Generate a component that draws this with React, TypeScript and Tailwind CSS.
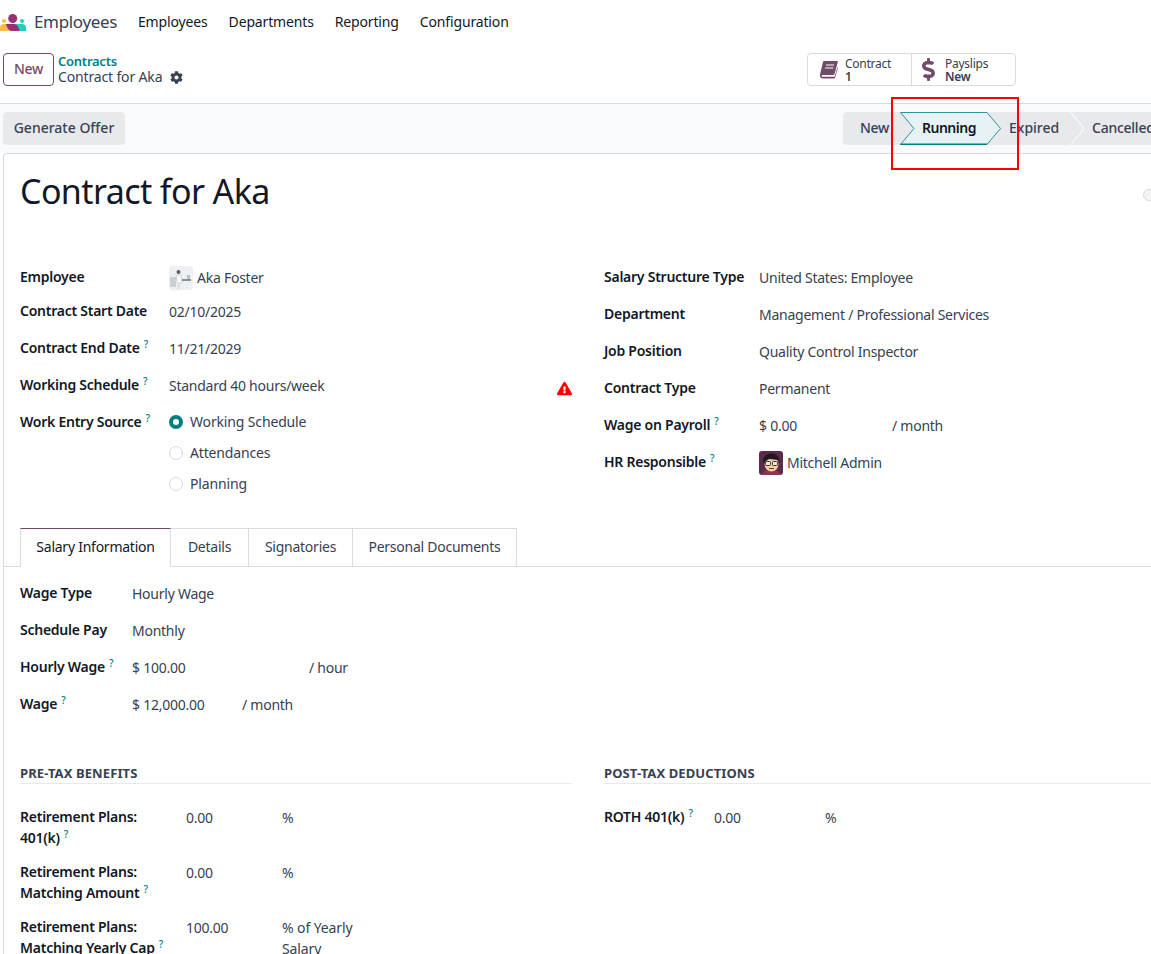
import { FaCog, FaDollarSign, FaExclamationTriangle } from "react-icons/fa";

const Hint = () => <sup className="ml-1 text-[10px] font-medium text-[#017e84] leading-none">?</sup>;

function Label({ text, hint }: { text: string; hint?: boolean }) {
  return (
    <span className="font-semibold text-[#111827]">
      {text}
      {hint && <Hint />}
    </span>
  );
}

function Row({ label, hint, h, w, children }: { label: string; hint?: boolean; h: string; w: string; children: React.ReactNode }) {
  return (
    <div className={`flex ${h}`}>
      <div className={`${w} shrink-0`}>
        <Label text={label} hint={hint} />
      </div>
      <div className="flex-1 pt-px">{children}</div>
    </div>
  );
}

function Radio({ checked, label }: { checked?: boolean; label: string }) {
  return (
    <div className="flex h-[31px] items-start gap-[7px]">
      {checked ? (
        <span className="mt-[4px] h-[14px] w-[14px] rounded-full border-[4px] border-[#017e84] bg-white" />
      ) : (
        <span className="mt-[4px] h-[14px] w-[14px] rounded-full border border-[#d8dadd] bg-white" />
      )}
      <span className="tracking-[-0.15px]">{label}</span>
    </div>
  );
}

function Logo() {
  return (
    <svg width="26" height="18" viewBox="0 0 26 18">
      <circle cx="4" cy="7" r="2" fill="#fbb945" />
      <circle cx="22" cy="7" r="2" fill="#1ad3bb" />
      <path d="M0 17v-3a4 4 0 0 1 4-4h8v7z" fill="#fbb945" />
      <path d="M26 17v-3a4 4 0 0 0-4-4h-8v7z" fill="#1ad3bb" />
      <circle cx="12.700" cy="4.500" r="4.500" fill="#9b2f76" />
      <path d="M6 10h8c3 0 5 3 5.500 7H12c-3 0-5-3-6-7z" fill="#9b2f76" />
    </svg>
  );
}

function BookIcon() {
  return (
    <svg width="19" height="19" viewBox="0 0 19 19" className="shrink-0">
      <path d="M5 1h13c.7 0 1 .5.800 1.200L15.500 14c-.2.600-.6 1-1.300 1H4c-1.200 0-1.500.7-1.300 1.200.2.400.7.600 1.300.600h11.500l3-9.500.5.500-3 10c-.2.500-.5.700-1 .700H4c-2 0-3.500-1.500-3-4L4 2c.2-.6.500-1 1-1z" fill="#714b67" />
      <path d="M7 5h8M6.200 8h8" stroke="#fff" strokeWidth="1.100" />
    </svg>
  );
}

function EmployeeAvatar() {
  return (
    <svg width="24" height="24" viewBox="0 0 24 24" className="rounded-[3px]">
      <rect width="24" height="24" fill="#eef1f4" />
      <rect x="1" y="11" width="6" height="10" fill="#c9d0d6" />
      <circle cx="9.500" cy="6" r="2" fill="#6b5a58" />
      <path d="M7 9h5l1 8H8z" fill="#fafafa" stroke="#b5b5b8" strokeWidth="0.500" />
      <path d="M13 13h9v2h-9z" fill="#8a9095" />
      <path d="M18 9h3v4h-3z" fill="#b9bec4" />
      <path d="M8 17h3v6H8z" fill="#dfe3e6" />
    </svg>
  );
}

function AdminAvatar() {
  return (
    <svg width="24" height="24" viewBox="0 0 24 24" className="rounded-[3px]">
      <rect width="24" height="24" fill="#5b2b4b" />
      <path d="M3 24c0-4 4-5 9-5s9 1 9 5z" fill="#8f3450" />
      <ellipse cx="12.500" cy="13" rx="7" ry="7.500" fill="#f0cfa6" />
      <path d="M4.500 13C3 6 7 2.500 12 2.500S21 5 20.500 12l-1.500-3-9-1-3 2z" fill="#1f1a22" />
      <rect x="6.500" y="10.500" width="5" height="4" rx="1" fill="#f7e6cf" stroke="#222" strokeWidth="0.900" />
      <rect x="13.500" y="10.500" width="5" height="4" rx="1" fill="#f7e6cf" stroke="#222" strokeWidth="0.900" />
      <path d="M10 17.500h5" stroke="#7a3a2a" strokeWidth="1" />
    </svg>
  );
}

export default function App() {
  return (
    <div className="relative h-[954px] w-[1151px] overflow-hidden bg-white text-[14px] leading-[21px] tracking-[-0.25px] text-[#374151] font-['Noto_Sans','Open_Sans',sans-serif]">
      {/* nav */}
      <nav className="flex h-[46px] items-center">
        <Logo />
        <span className="mb-[4px] ml-[8px] text-[17px] tracking-[-0.35px] text-[#374151]">Employees</span>
        <div className="mb-[4px] ml-[21px] flex gap-[21px] tracking-[-0.15px] text-[#111827]">
          <span>Employees</span>
          <span>Departments</span>
          <span>Reporting</span>
          <span>Configuration</span>
        </div>
      </nav>

      {/* control panel */}
      <div className="flex h-[58px] items-start border-b border-[#d8dadd] pt-[7px]">
        <button className="ml-[3px] h-[33px] w-[51px] rounded-[4px] border border-[#714b67] pb-[2px] font-medium text-[#714b67]">New</button>
        <div className="ml-[4px] flex flex-col leading-[16px]">
          <span className="font-semibold text-[13px] text-[#017e84]">Contracts</span>
          <span className="flex items-center gap-[8px] tracking-[-0.15px]">
            Contract for Aka <FaCog className="text-[13px]" />
          </span>
        </div>
        <div className="ml-auto mr-[135px] flex h-[33px] rounded-[4px] border border-[#d8dadd] text-[12px] leading-[13px]">
          <div className="flex w-[104px] items-center gap-[7px] border-r border-[#d8dadd] pl-[11px]">
            <BookIcon />
            <div>
              <div>Contract</div>
              <div className="font-semibold">1</div>
            </div>
          </div>
          <div className="flex w-[103px] items-center gap-[5px] pl-[5px]">
            <FaDollarSign className="shrink-0 text-[23px] text-[#714b67]" />
            <div>
              <div>Payslips</div>
              <div className="font-semibold">New</div>
            </div>
          </div>
        </div>
      </div>

      {/* status row */}
      <div className="flex h-[49px] items-center justify-between bg-[#f9fafb] pl-[3px]">
        <button className="h-[33px] w-[122px] rounded-[4px] bg-[#e7e9ed] pb-[2px] font-medium tracking-[0px]">Generate Offer</button>
        <div className="relative -mr-[40px] flex h-[33px] w-[348px] items-center rounded-l-[4px] bg-[#e7e9ed] font-medium">
          <span className="mb-[2px] ml-[17px] w-[40px]">New</span>
          <div className="relative flex h-[33px] w-[101px] items-center">
            <svg width="101" height="33" viewBox="0 0 101 33" className="absolute left-0 top-0">
              <path d="M0.500 0.500H87L100.500 16.500L87 32.500H0.500L14 16.500Z" fill="#e6f2f3" stroke="#017e84" strokeWidth="0.800" />
              <path d="M0.500 32.300H87" stroke="#017e84" strokeWidth="1.500" />
            </svg>
            <span className="relative mb-[2px] ml-[22px] font-semibold tracking-[-0.5px] text-[#111827]">Running</span>
          </div>
          <span className="mb-[2px] ml-[8px] w-[61px] tracking-[0px]">Expired</span>
          <svg width="15" height="33" viewBox="0 0 15 33" className="shrink-0">
            <path d="M0.500 0L14 16.500L0.500 33" fill="none" stroke="#fff" />
          </svg>
          <span className="mb-[2px] ml-[7px]">Cancelled</span>
        </div>
      </div>

      {/* sheet */}
      <div className="ml-[3px] w-[1200px] rounded-tl-[4px] border-l border-t border-[#d8dadd] bg-white">
        <div className="relative h-[112px] pl-[16px] pt-[12px]">
          <h1 className="text-[34px] leading-[50px] tracking-[-0.6px] text-[#111827]">Contract for Aka</h1>
          <span className="absolute left-[1139px] top-[35px] h-[12px] w-[12px] rounded-full border border-[#d8dadd] bg-[#f3f4f6]" />
        </div>

        <div className="flex gap-[32px] pl-[16px]">
          <div className="relative w-[552px]">
            <Row label="Employee" h="h-[34px]" w="w-[149px]">
              <div className="-mt-px flex items-center gap-[4px]"><EmployeeAvatar /><span className="-mt-px">Aka Foster</span></div>
            </Row>
            <Row label="Contract Start Date" h="h-[37px]" w="w-[149px]">02/10/2025</Row>
            <Row label="Contract End Date" hint h="h-[37px]" w="w-[149px]">11/21/2029</Row>
            <Row label="Working Schedule" hint h="h-[37px]" w="w-[149px]">
              <div className="flex justify-between">
                <span>Standard 40 hours/week</span>
                <FaExclamationTriangle className="mt-[6px] text-[15px] text-[#ff0000]" />
              </div>
            </Row>
            <Row label="Work Entry Source" hint h="h-[100px]" w="w-[149px]">
              <div className="-mt-px">
                <Radio checked label="Working Schedule" />
                <Radio label="Attendances" />
                <Radio label="Planning" />
              </div>
            </Row>
          </div>
          <div className="flex-1">
            <Row label="Salary Structure Type" h="h-[37px]" w="w-[155px]">United States: Employee</Row>
            <Row label="Department" h="h-[37px]" w="w-[155px]">Management / Professional Services</Row>
            <Row label="Job Position" h="h-[37px]" w="w-[155px]">Quality Control Inspector</Row>
            <Row label="Contract Type" h="h-[37px]" w="w-[155px]">Permanent</Row>
            <Row label="Wage on Payroll" hint h="h-[37px]" w="w-[155px]">
              <div className="flex"><span className="w-[133px]">$ 0.00</span><span>/ month</span></div>
            </Row>
            <Row label="HR Responsible" hint h="h-[37px]" w="w-[155px]">
              <div className="-mt-px flex items-center gap-[4px]"><AdminAvatar /><span className="-mt-px">Mitchell Admin</span></div>
            </Row>
          </div>
        </div>

        {/* tabs */}
        <div className="mt-[17px] flex h-[39px] border-b border-[#d8dadd] pl-[16px]">
          <div className="-mb-px flex h-[39px] w-[151px] items-center justify-center border border-b-0 border-[#d8dadd] border-t-[#714b67] bg-white pb-[3px] text-[#111827]">Salary Information</div>
          <div className="flex w-[78px] items-center justify-center border-r border-t border-[#d8dadd] pb-[2px]">Details</div>
          <div className="flex w-[104px] items-center justify-center border-r border-t border-[#d8dadd] pb-[2px]">Signatories</div>
          <div className="flex w-[164px] items-center justify-center border-r border-t border-[#d8dadd] pb-[2px]">Personal Documents</div>
        </div>

        <div className="pl-[16px] pt-[15px]">
          <Row label="Wage Type" h="h-[37px]" w="w-[112px]">Hourly Wage</Row>
          <Row label="Schedule Pay" h="h-[37px]" w="w-[112px]">Monthly</Row>
          <Row label="Hourly Wage" hint h="h-[37px]" w="w-[112px]">
            <div className="flex"><span className="w-[177px]">$ 100.00</span><span>/ hour</span></div>
          </Row>
          <Row label="Wage" hint h="h-[37px]" w="w-[112px]">
            <div className="flex"><span className="w-[110px]">$ 12,000.00</span><span>/ month</span></div>
          </Row>
        </div>

        <div className="mt-[34px] flex gap-[32px] pl-[16px]">
          <div className="w-[552px]">
            <div className="mb-[22px] border-b border-[#e7e9ed] text-[13px] font-bold leading-[19px] tracking-[0.1px] text-[#374151]">PRE-TAX BENEFITS</div>
            <div className="flex h-[55px]">
              <div className="w-[166px] font-semibold text-[#111827]">Retirement Plans:<br />401(k)<Hint /></div>
              <span className="w-[96px] pt-px">0.00</span><span className="pt-px">%</span>
            </div>
            <div className="flex h-[55px]">
              <div className="w-[166px] font-semibold text-[#111827]">Retirement Plans:<br />Matching Amount<Hint /></div>
              <span className="w-[96px] pt-px">0.00</span><span className="pt-px">%</span>
            </div>
            <div className="flex h-[55px]">
              <div className="w-[166px] font-semibold text-[#111827]">Retirement Plans:<br />Matching Yearly Cap<Hint /></div>
              <span className="w-[96px] pt-px">100.00</span><span className="w-[80px] pt-px tracking-[-0.1px]">% of Yearly Salary</span>
            </div>
          </div>
          <div className="flex-1">
            <div className="mb-[22px] border-b border-[#e7e9ed] text-[13px] font-bold leading-[19px] tracking-[0.1px] text-[#374151]">POST-TAX DEDUCTIONS</div>
            <div className="flex">
              <div className="w-[110px] font-semibold text-[#111827]">ROTH 401(k)<Hint /></div>
              <span className="w-[111px] pt-px">0.00</span><span className="pt-px">%</span>
            </div>
          </div>
        </div>
      </div>

      {/* red annotation over the status bar */}
      <div className="absolute left-[891px] top-[97px] h-[73px] w-[128px] border-2 border-[#ff0000]" />
    </div>
  );
}
